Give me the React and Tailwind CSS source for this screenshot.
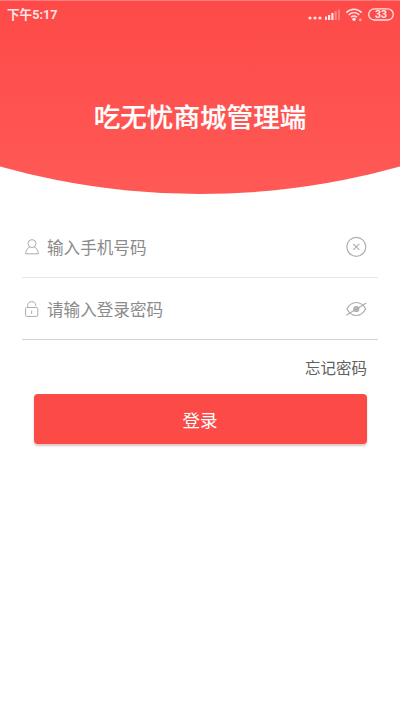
export default function App() {
  return (
    <div className="flex h-[710px] w-[400px] flex-col overflow-hidden bg-white font-['Noto_Sans_CJK_SC',sans-serif]">
      <header className="flex h-[194px] flex-col border-t border-[#ff7e7b] bg-linear-to-b from-[#fd4a48] to-[#ff5956] text-white [clip-path:circle(741px_at_50%_-547px)]">
        <StatusBar />
        <h1 className="mt-[67px] text-center text-[26.6px] leading-10 font-medium [-webkit-text-stroke:0.2px_white]">吃无忧商城管理端</h1>
      </header>

      <main className="flex flex-col px-[22px] pt-[22px]">
        <Field icon={<UserIcon />} text="输入手机号码" action={<ClearIcon />} lineClass="border-[#e6e6e6]" />
        <Field icon={<LockIcon />} text="请输入登录密码" action={<EyeOffIcon />} lineClass="border-[#d2d2d2]" />

        <a className="mt-[15px] mr-[11px] self-end text-[15.5px] leading-6 text-[#606060]">忘记密码</a>

        <button className="mt-[15px] mr-[11px] ml-3 h-[50px] rounded-[4px] bg-[#fc4a47] pt-[3px] pr-px text-[17.5px] text-white shadow-[0_2px_2px_rgba(150,60,60,0.3)]">
          登录
        </button>
      </main>
    </div>
  );
}

function Field({ icon, text, action, lineClass }) {
  return (
    <div className={`flex h-[62px] items-center border-b pr-[11px] ${lineClass}`}>
      <div className="flex w-[25px] pl-[3px]">{icon}</div>
      <span className="flex-1 text-[16.6px] leading-6 text-[#8b8b8b]">{text}</span>
      {action}
    </div>
  );
}

function StatusBar() {
  return (
    <div className="flex h-7 items-center justify-between pr-[6px] pl-[7px] text-[#ffe4e3]">
      <span className="font-[Roboto,'Noto_Sans_CJK_SC',sans-serif] text-[12.6px] font-bold">下午5:17</span>
      <svg width="86" height="16" viewBox="0 0 86 16" fill="none" stroke="currentColor">
        <g fill="currentColor" stroke="none">
          <circle cx="2" cy="11" r="1.6" />
          <circle cx="7" cy="11" r="1.6" />
          <circle cx="12" cy="11" r="1.6" />
          <rect x="17" y="9.5" width="2" height="3.5" />
          <rect x="20" y="8" width="2.2" height="5" />
          <rect x="23.3" y="6" width="2.2" height="7" />
          <rect x="26.7" y="4" width="2" height="9" opacity=".4" />
          <rect x="30" y="2.5" width="2" height="10.5" opacity=".35" />
          <circle cx="46" cy="12.3" r="1.7" />
          <circle cx="52.3" cy="12.8" r="1.4" opacity=".65" />
        </g>
        <path d="M38.3 5.6c4.6-4.4 10.8-4.4 15.4 0M40.7 8c3.2-3 7.4-3 10.6 0M43 10.3c2-1.7 4-1.7 6 0" strokeWidth="1.5" />
        <rect x="60.7" y="1.8" width="24.6" height="11.2" rx="5.6" strokeWidth="1.3" />
        <text x="73" y="11.2" textAnchor="middle" fill="currentColor" stroke="none" className="font-[Roboto] text-[10.5px] font-bold">33</text>
      </svg>
    </div>
  );
}

function UserIcon() {
  return (
    <svg width="14" height="16" viewBox="0 0 14 16" fill="none" stroke="#adadad">
      <circle cx="7" cy="4.6" r="4" />
      <path d="M4.7 8C2.3 9.2.8 11.5.6 14.8h12.8C13.2 11.5 11.7 9.2 9.3 8" />
    </svg>
  );
}

function LockIcon() {
  return (
    <svg width="14" height="16" viewBox="0 0 14 16" fill="none" stroke="#adadad">
      <rect x=".6" y="6.5" width="12.2" height="8.9" rx="1" />
      <path d="M2.7 6.5V4.2C2.7 2 4.3.6 6.7.6s4 1.4 4 3.6v1M6.7 9.5V13" />
    </svg>
  );
}

function ClearIcon() {
  return (
    <svg width="21" height="21" viewBox="0 0 21 21" fill="none" stroke="#b0b0b0" strokeWidth="1.2">
      <circle cx="10.3" cy="10.8" r="9.5" />
      <path d="M7.3 7.8l6 6M13.3 7.8l-6 6" />
    </svg>
  );
}

function EyeOffIcon() {
  return (
    <svg width="21" height="16" viewBox="0 0 21 16" fill="none" stroke="#adadad" strokeWidth="1.2">
      <path d="M1 8C3.2 3.7 6.4 1.5 10.3 1.5S17.4 3.7 19.6 8c-2.2 4.3-5.4 6.5-9.3 6.5S3.2 12.3 1 8z" />
      <circle cx="10.3" cy="8" r="2.5" fill="#bdbdbd" />
      <path d="M.3 14.3L20.3 2" />
    </svg>
  );
}
